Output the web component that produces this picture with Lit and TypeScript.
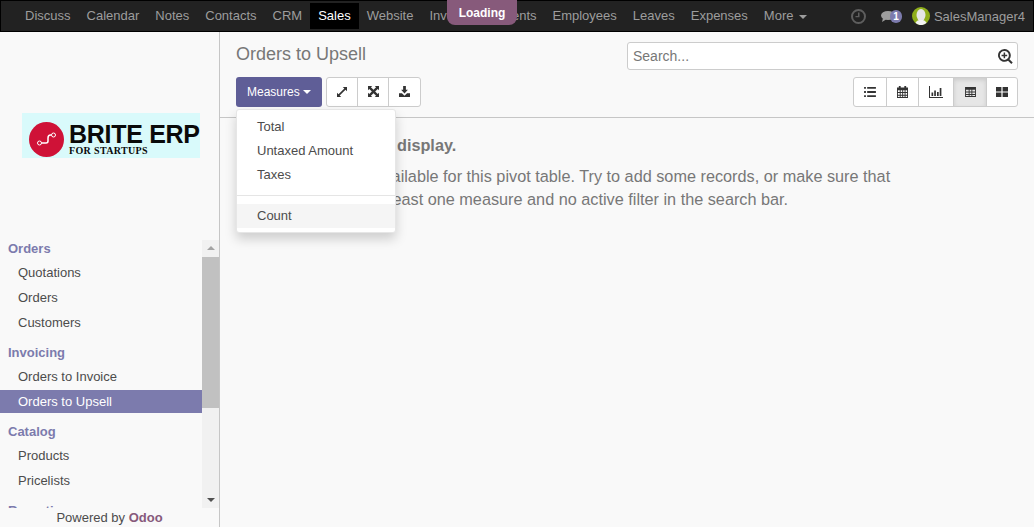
import { LitElement, html, css, svg } from "lit";
import { customElement } from "lit/decorators.js";

const NAV = ["Discuss", "Calendar", "Notes", "Contacts", "CRM", "Sales", "Website", "Invoicing", "Events", "Employees", "Leaves", "Expenses"];

const MENU = [
  { title: "Orders", items: ["Quotations", "Orders", "Customers"] },
  { title: "Invoicing", items: ["Orders to Invoice", "Orders to Upsell"] },
  { title: "Catalog", items: ["Products", "Pricelists"] },
  { title: "Reporting", items: [] },
];

const icon = (w: number, h: number, vw: number, vh: number, body: unknown) =>
  html`<svg width=${w} height=${h} viewBox="0 0 ${vw} ${vh}" fill="currentColor">${body}</svg>`;

const ICONS = {
  arrows: icon(10, 10, 12, 12, svg`<path d="M7 0h5v5l-1.800-1.800L3.200 10.200 5 12H0V7l1.800 1.800 7-7z"/>`),
  expand: icon(11, 11, 12, 12, svg`<path d="M0 0h4.600L3.200 1.400 6 4.200l2.800-2.800L7.400 0H12v4.600l-1.400-1.400L7.800 6l2.800 2.800 1.400-1.400V12H7.400l1.400-1.400L6 7.800l-2.800 2.800L4.600 12H0V7.400l1.400 1.400L4.200 6 1.400 3.200 0 4.600z"/>`),
  download: icon(11, 11, 12, 12, svg`<path d="M4.500 0h3v4.200h2.200L6 8.200 2.300 4.200h2.200z"/><path d="M0 8h3.200L6 10.600 8.800 8H12v4H0z"/>`),
  list: icon(12, 10, 13, 11, svg`<path d="M0 0h2v2H0zM3.400 0H13v2H3.400zM0 4.500h2v2H0zM3.400 4.500H13v2H3.400zM0 9h2v2H0zM3.400 9H13v2H3.400z"/>`),
  calendar: icon(11, 12, 12, 13, svg`<path fill-rule="evenodd" d="M2 0h2v1.500h4V0h2v1.500h2V13H0V1.500h2zM1 4.500v2h2v-2zm3 0v2h1.700v-2zm2.700 0v2h1.600v-2zm2.600 0v2H11v-2zM1 7.500v2h2v-2zm3 0v2h1.700v-2zm2.700 0v2h1.600v-2zm2.600 0v2H11v-2zM1 10.500V12h2v-1.500zm3 0V12h1.700v-1.500zm2.700 0V12h1.600v-1.500zm2.600 0V12H11v-1.500z"/>`),
  chart: icon(14, 12, 14, 12, svg`<path d="M0 0h1v11h13v1H0zM2.500 6.500h1.700V10H2.500zM5.200 4.500h1.700V10H5.200zM8 6h1.700v4H8zM10.700 2h1.700v8h-1.700z"/>`),
  table: icon(11, 10, 12, 11, svg`<path fill-rule="evenodd" d="M0 0h12v11H0zm1 3v2h3V3zm4 0v2h2V3zm3 0v2h3V3zM1 6v1.700h3V6zm4 0v1.700h2V6zm3 0v1.700h3V6zM1 8.700V10h3V8.700zm4 0V10h2V8.700zm3 0V10h3V8.700z"/>`),
  kanban: icon(12, 10, 12, 10, svg`<path d="M0 0h5.400v4.400H0zM6.600 0H12v4.400H6.600zM0 5.600h5.400V10H0zM6.600 5.600H12V10H6.600z"/>`),
  search: icon(15, 15, 16, 16, svg`<path fill-rule="evenodd" d="M6.800 0a6.800 6.800 0 0 1 5.400 10.900l3.500 3.500-1.500 1.500-3.500-3.500A6.800 6.800 0 1 1 6.800 0zm0 2a4.800 4.800 0 1 0 0 9.600 4.800 4.800 0 0 0 0-9.600z"/><path d="M6 3.800h1.600V6h2.200v1.600H7.600v2.200H6V7.600H3.800V6H6z"/>`),
  clock: icon(15, 15, 15, 15, svg`<path fill-rule="evenodd" d="M7.500 0a7.500 7.500 0 1 1 0 15 7.500 7.500 0 0 1 0-15zm0 2a5.500 5.500 0 1 0 0 11 5.500 5.500 0 0 0 0-11z"/><path d="M7 3.500h1.500v4.800H4.500V7H7z"/>`),
  comments: icon(14, 11, 14, 11, svg`<ellipse cx="7" cy="4.500" rx="7" ry="4.500"/><path d="M2 7l-1 4 4-2.500z"/>`),
};

@customElement("app-root")
export class AppRoot extends LitElement {
  static styles = css`
    :host {
      display: flex;
      flex-direction: column;
      height: 100vh;
      overflow: hidden;
      background: #f9f9f9;
      color: #4c4c4c;
      font-family: "Liberation Sans", Arial, sans-serif;
      font-size: 13px;
    }
    .nav {
      position: relative;
      flex: none;
      display: flex;
      align-items: center;
      box-sizing: border-box;
      height: 32px;
      padding-left: 16px;
      background: #222;
      border: 1px solid #000;
      color: #9d9d9d;
      white-space: nowrap;
    }
    .nav-item {
      height: 26px;
      line-height: 25px;
      padding: 0 8px;
    }
    .nav-item.active {
      background: #000;
      color: #fff;
    }
    .caret {
      display: inline-block;
      margin-left: 2px;
      vertical-align: middle;
      border-top: 4px solid currentColor;
      border-left: 4px solid transparent;
      border-right: 4px solid transparent;
    }
    .nav-right {
      display: flex;
      align-items: center;
      margin-left: auto;
      padding-right: 8px;
    }
    .clock {
      display: flex;
      color: #5e5e5e;
      margin-right: 15px;
    }
    .chat {
      position: relative;
      display: flex;
      width: 20px;
      color: #9d9d9d;
      margin-right: 11px;
    }
    .badge {
      position: absolute;
      left: 9px;
      top: -1px;
      width: 12px;
      height: 13px;
      border-radius: 7px;
      background: #7c7bad;
      color: #fff;
      font-size: 10px;
      font-weight: bold;
      line-height: 13px;
      text-align: center;
    }
    .avatar {
      display: flex;
      margin-right: 4px;
    }
    .loading {
      position: absolute;
      left: 446px;
      top: -1px;
      width: 70px;
      height: 25px;
      background: #875a7b;
      border-radius: 0 0 8px 8px;
      color: #fff;
      font-size: 12px;
      font-weight: bold;
      line-height: 26px;
      text-align: center;
    }
    .body {
      flex: 1;
      display: flex;
      min-height: 0;
    }
    .side {
      flex: none;
      display: flex;
      flex-direction: column;
      box-sizing: border-box;
      width: 220px;
      border-right: 1px solid #c6c6c6;
    }
    .logo-wrap {
      flex: none;
      height: 208px;
      padding: 81px 0 0 22px;
      box-sizing: border-box;
    }
    .logo {
      display: flex;
      align-items: center;
      box-sizing: border-box;
      width: 178px;
      height: 45px;
      padding: 8px 0 0 7px;
      background: #d9fafb;
      color: #0a0a0a;
    }
    .logo-text {
      margin-left: 5px;
    }
    .logo-main {
      font-size: 25px;
      font-weight: bold;
      line-height: 22px;
      letter-spacing: -0.3px;
      white-space: nowrap;
    }
    .logo-sub {
      margin-top: 1px;
      font-family: "Liberation Serif", serif;
      font-size: 10px;
      font-weight: bold;
      line-height: 10px;
      letter-spacing: 0.35px;
      white-space: nowrap;
    }
    .side-scroll {
      flex: 1;
      display: flex;
      min-height: 0;
    }
    .menu {
      flex: 1;
      min-width: 0;
      overflow: hidden;
    }
    .menu-inner {
      margin-top: -3px;
    }
    .group {
      padding-bottom: 5px;
    }
    .group-title {
      height: 24px;
      padding-left: 8px;
      color: #7c7bad;
      font-weight: bold;
      line-height: 24px;
    }
    .group-item {
      height: 25px;
      padding-left: 18px;
      line-height: 24px;
    }
    .group-item.active {
      height: 23px;
      margin-bottom: 2px;
      background: #7c7bad;
      color: #fff;
      line-height: 23px;
    }
    .scrollbar {
      flex: none;
      display: flex;
      flex-direction: column;
      align-items: center;
      width: 17px;
      background: #f1f1f1;
    }
    .arrow {
      flex: none;
      width: 0;
      height: 0;
      margin: 6px 0;
      border-left: 4px solid transparent;
      border-right: 4px solid transparent;
    }
    .arrow.up {
      border-bottom: 4px solid #a3a3a3;
    }
    .arrow.down {
      margin-top: auto;
      border-top: 4px solid #505050;
    }
    .thumb {
      flex: none;
      width: 100%;
      height: 151px;
      margin-top: 1px;
      background: #c1c1c1;
    }
    .powered {
      flex: none;
      height: 19px;
      line-height: 20px;
      text-align: center;
    }
    .powered b {
      color: #875a7b;
    }
    .main {
      position: relative;
      flex: 1;
      min-width: 0;
    }
    .panel {
      box-sizing: border-box;
      height: 86px;
      padding: 10px 16px 0;
      border-bottom: 1px solid #c6c6c6;
    }
    .row {
      display: flex;
      justify-content: space-between;
      align-items: flex-start;
    }
    .title {
      margin-top: 1px;
      color: #777;
      font-size: 18px;
      line-height: 22px;
    }
    .search {
      display: flex;
      align-items: center;
      justify-content: space-between;
      box-sizing: border-box;
      width: 391px;
      height: 28px;
      padding: 0 4px 0 5px;
      background: #fff;
      border: 1px solid #ccc;
      border-radius: 3px;
      color: #777;
      font-size: 14px;
    }
    .search svg {
      color: #333;
      display: block;
    }
    .tools {
      margin-top: 7px;
    }
    .left-tools {
      display: flex;
      gap: 4px;
    }
    .primary {
      display: flex;
      align-items: center;
      box-sizing: border-box;
      width: 86px;
      height: 30px;
      padding: 0 0 1px 11px;
      background: #5f5e97;
      border-radius: 3px;
      color: #fff;
      font-size: 12px;
    }
    .primary .caret {
      margin-left: 0;
    }
    .btn-group {
      display: flex;
      background: #fff;
      border: 1px solid #ccc;
      border-radius: 3px;
      height: 30px;
      box-sizing: border-box;
      color: #333;
    }
    .btn {
      display: flex;
      align-items: center;
      justify-content: center;
      box-sizing: border-box;
      width: 31px;
      padding-bottom: 1px;
      border-left: 1px solid #ccc;
    }
    .btn:first-child {
      border-left: 0;
      width: 30px;
    }
    .left-tools .btn:last-child { width: 32px; }
    .views .btn:nth-child(1) { width: 32px; }
    .views .btn:nth-child(2) { width: 32px; }
    .views .btn:nth-child(3) { width: 35px; }
    .views .btn:nth-child(4) { width: 33px; }
    .views .btn:nth-child(5) { width: 31px; }
    .btn.active {
      background: #e6e6e6;
      box-shadow: inset 0 2px 4px rgba(0, 0, 0, 0.12);
    }
    .empty {
      padding: 16px 0 0 93px;
      width: 680px;
      box-sizing: border-box;
      color: #777;
      font-size: 16.25px;
      line-height: 23px;
    }
    .empty-title {
      margin-bottom: 8px;
      font-weight: bold;
    }
    .dropdown {
      position: absolute;
      left: 16px;
      top: 77px;
      box-sizing: border-box;
      width: 160px;
      height: 124px;
      padding: 5px 0;
      background: #fff;
      border: 1px solid #e6e6e6;
      border-radius: 3px;
      box-shadow: 0 6px 12px rgba(0, 0, 0, 0.175);
    }
    .dd-item {
      height: 24px;
      padding-left: 20px;
      line-height: 23px;
    }
    .dd-item.hover {
      background: #f5f5f5;
    }
    .dd-sep {
      height: 1px;
      margin: 8px 0;
      background: #e5e5e5;
    }
  `;

  render() {
    return html`
      <div class="nav">
        ${NAV.map((n) => html`<div class="nav-item ${n === "Sales" ? "active" : ""}">${n}</div>`)}
        <div class="nav-item">More <span class="caret"></span></div>
        <div class="nav-right">
          <span class="clock">${ICONS.clock}</span>
          <span class="chat">${ICONS.comments}<span class="badge">1</span></span>
          <span class="avatar">
            <svg width="18" height="18" viewBox="0 0 18 18">
              <circle cx="9" cy="9" r="9" fill="#8fae1b" />
              <ellipse cx="9" cy="8" rx="4.500" ry="6" fill="#e6e6e6" />
              <path d="M3.500 16c1-2.500 3-3 5.500-3s4.500.5 5.500 3a9 9 0 0 1-11 0z" fill="#f3f3f3" />
            </svg>
          </span>
          <span>SalesManager4</span>
        </div>
        <div class="loading">Loading</div>
      </div>
      <div class="body">
        <div class="side">
          <div class="logo-wrap">
            <div class="logo">
              <svg width="35" height="35" viewBox="0 0 35 35">
                <circle cx="17.500" cy="17.500" r="17.500" fill="#cf1237" />
                <path d="M12 21h5c1 0 2-1 2-2v-3c0-1.500 1-3 2.500-3h1" fill="none" stroke="#fff" stroke-width="1.500" />
                <circle cx="10.500" cy="21" r="2" fill="#cf1237" stroke="#fff" />
                <circle cx="24.500" cy="13" r="2" fill="#cf1237" stroke="#fff" />
              </svg>
              <div class="logo-text">
                <div class="logo-main">BRITE ERP</div>
                <div class="logo-sub">FOR STARTUPS</div>
              </div>
            </div>
          </div>
          <div class="side-scroll">
            <div class="menu">
              <div class="menu-inner">
                ${MENU.map(
                  (g) => html`
                    <div class="group">
                      <div class="group-title">${g.title}</div>
                      ${g.items.map(
                        (i) => html`<div class="group-item ${i === "Orders to Upsell" ? "active" : ""}">${i}</div>`,
                      )}
                    </div>
                  `,
                )}
              </div>
            </div>
            <div class="scrollbar">
              <div class="arrow up"></div>
              <div class="thumb"></div>
              <div class="arrow down"></div>
            </div>
          </div>
          <div class="powered">Powered by <b>Odoo</b></div>
        </div>
        <div class="main">
          <div class="panel">
            <div class="row">
              <div class="title">Orders to Upsell</div>
              <div class="search"><span>Search...</span>${ICONS.search}</div>
            </div>
            <div class="row tools">
              <div class="left-tools">
                <div class="primary">Measures&nbsp;<span class="caret"></span></div>
                <div class="btn-group">
                  <div class="btn">${ICONS.arrows}</div>
                  <div class="btn">${ICONS.expand}</div>
                  <div class="btn">${ICONS.download}</div>
                </div>
              </div>
              <div class="btn-group views">
                <div class="btn">${ICONS.list}</div>
                <div class="btn">${ICONS.calendar}</div>
                <div class="btn">${ICONS.chart}</div>
                <div class="btn active">${ICONS.table}</div>
                <div class="btn">${ICONS.kanban}</div>
              </div>
            </div>
          </div>
          <div class="empty">
            <div class="empty-title">No data to display.</div>
            <div>
              No data available for this pivot table. Try to add some records, or make sure that there is at least one
              measure and no active filter in the search bar.
            </div>
          </div>
          <div class="dropdown">
            <div class="dd-item">Total</div>
            <div class="dd-item">Untaxed Amount</div>
            <div class="dd-item">Taxes</div>
            <div class="dd-sep"></div>
            <div class="dd-item hover">Count</div>
          </div>
        </div>
      </div>
    `;
  }
}
